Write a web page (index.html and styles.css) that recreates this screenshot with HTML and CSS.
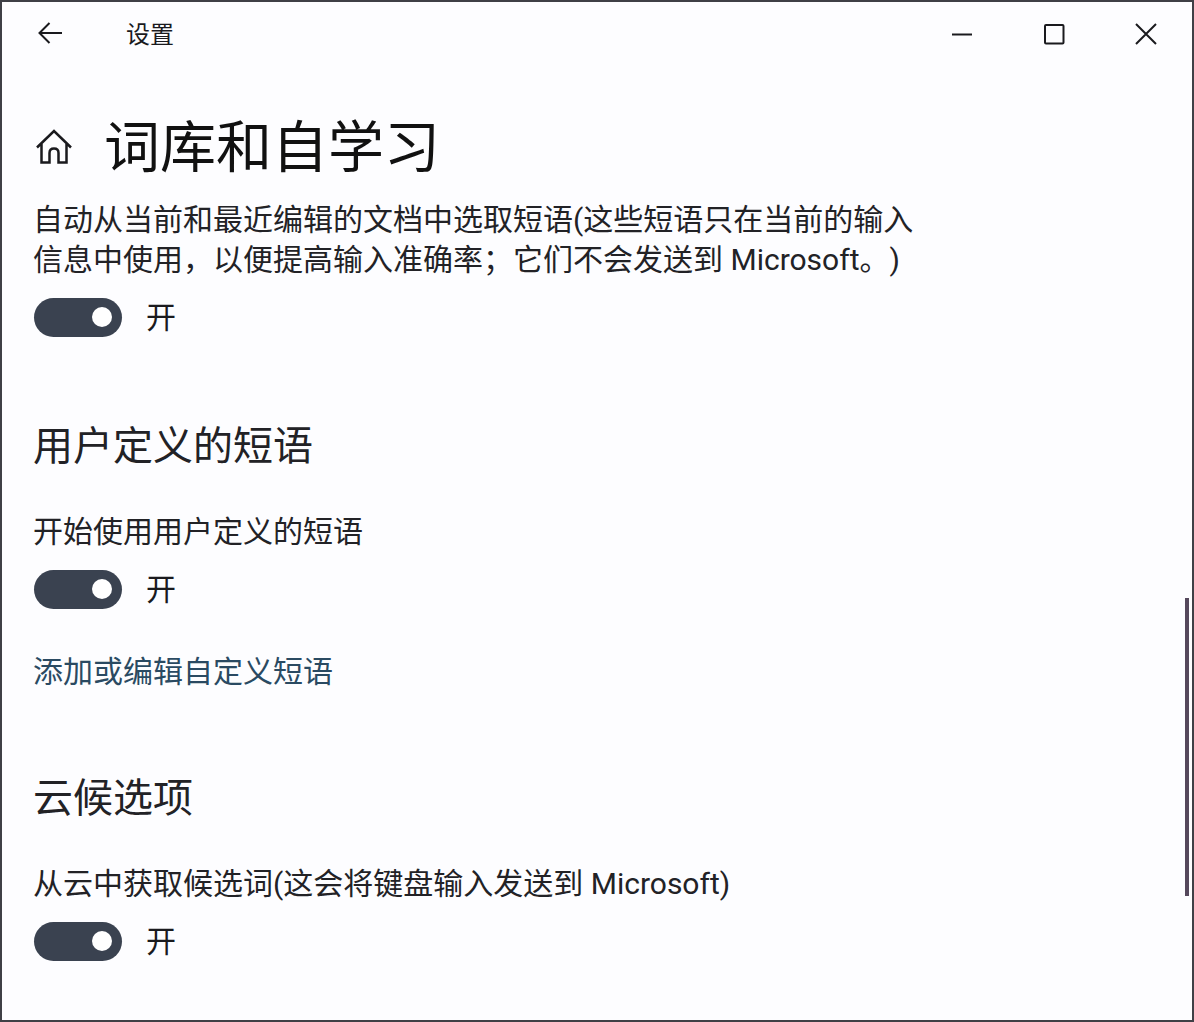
FILE: index.html
```html
<!DOCTYPE html>
<html>
<head>
  <title>设置</title>
  <meta name="viewport" content="width=device-width, initial-scale=1.0">
  <link rel="stylesheet" href="styles.css">
</head>
<body>
  <div class="window">
    <header class="titlebar">
      <svg class="back-icon" width="28" height="28" viewBox="0 0 28 28">
        <path d="M12.5 4 L2.5 14 L12.5 24 M2.5 14 H25" />
      </svg>
      <span class="app-name">设置</span>
      <div class="window-controls">
        <svg width="22" height="22" viewBox="0 0 22 22"><path d="M1 11.5 H21" /></svg>
        <svg width="22" height="22" viewBox="0 0 22 22"><rect x="2" y="2" width="18.5" height="18.5" rx="1" /></svg>
        <svg width="22" height="22" viewBox="0 0 22 22"><path d="M1 1 L21 21 M21 1 L1 21" /></svg>
      </div>
    </header>

    <div class="page-title">
      <svg class="home-icon" width="38" height="36" viewBox="0 0 38 36">
        <path d="M2 18.5 L19 2 L36 18.5 M6.5 15 V33.5 H14.5 V24 Q14.5 19.5 19 19.5 Q23.5 19.5 23.5 24 V33.5 H31.5 V15" />
      </svg>
      <h1>词库和自学习</h1>
    </div>

    <section class="intro">
      <p class="label">自动从当前和最近编辑的文档中选取短语(这些短语只在当前的输入<br>信息中使用，以便提高输入准确率；它们不会发送到 Microsoft。)</p>
      <div class="toggle-row">
        <span class="toggle"><span class="knob"></span></span>
        <span class="toggle-text">开</span>
      </div>
    </section>

    <section class="group">
      <h2>用户定义的短语</h2>
      <p class="label">开始使用用户定义的短语</p>
      <div class="toggle-row">
        <span class="toggle"><span class="knob"></span></span>
        <span class="toggle-text">开</span>
      </div>
      <a class="link" href="#">添加或编辑自定义短语</a>
    </section>

    <section class="group">
      <h2>云候选项</h2>
      <p class="label">从云中获取候选词(这会将键盘输入发送到 Microsoft)</p>
      <div class="toggle-row">
        <span class="toggle"><span class="knob"></span></span>
        <span class="toggle-text">开</span>
      </div>
    </section>

    <div class="scrollbar"></div>
  </div>
</body>
</html>
```

FILE: styles.css
```css
* {
  box-sizing: border-box;
  margin: 0;
  padding: 0;
}

html, body {
  height: 100%;
  background-color: #fdfdff;
}

body {
  font-family: Roboto, "Noto Sans CJK SC", sans-serif;
  color: #1a1a1e;
  overflow: hidden;
  text-spacing-trim: space-all;
}

.window {
  position: relative;
  height: 1022px;
  border: 2px solid #3f4046;
  padding: 0 31px;
  background-color: #fdfdff;
}

/* Title bar */
.titlebar {
  display: flex;
  align-items: center;
  height: 64px;
}

.titlebar svg path,
.titlebar svg rect,
.home-icon path {
  fill: none;
  stroke: #1a1a1e;
  stroke-width: 2;
}

.home-icon path {
  stroke-width: 2.5;
}

.back-icon {
  margin-left: 4px;
  margin-top: -2px;
}

.app-name {
  margin-left: 61px;
  margin-top: 2px;
  font-size: 24px;
  line-height: 32px;
}

.window-controls {
  display: flex;
  gap: 70px;
  margin-left: auto;
  margin-right: 4px;
}

/* Page heading */
.page-title {
  display: flex;
  align-items: center;
  margin-top: 19px;
  height: 116px;
}

.home-icon {
  margin-left: 2px;
  margin-top: 7px;
}

.page-title h1 {
  margin-left: 31px;
  margin-top: 10px;
  font-size: 56px;
  font-weight: 400;
  line-height: 106px;
  color: #111;
}

.label {
  padding-top: 3px;
  font-size: 30px;
  line-height: 40px;
  color: #222226;
}

.intro {
  margin-top: -4px;
}

.toggle-row {
  display: flex;
  align-items: center;
  gap: 24px;
  margin-top: 17px;
  height: 40px;
}

.toggle {
  display: flex;
  align-items: center;
  justify-content: flex-end;
  width: 88px;
  height: 39px;
  margin-left: 1px;
  padding-right: 10px;
  border-radius: 20px;
  background-color: #3a4250;
}

.knob {
  width: 20px;
  height: 20px;
  border-radius: 50%;
  background-color: #fff;
}

.toggle-text {
  margin-top: 2px;
  font-size: 30px;
  line-height: 40px;
}

.group {
  margin-top: 82px;
}

.group h2 {
  font-size: 40px;
  font-weight: 400;
  line-height: 56px;
  margin-bottom: 34px;
  color: #222226;
}

.link {
  display: block;
  margin-top: 43px;
  margin-bottom: -3px;
  font-size: 30px;
  line-height: 40px;
  color: #2a4a62;
  text-decoration: none;
}

/* Overlay scrollbar */
.scrollbar {
  position: absolute;
  top: 596px;
  right: 3px;
  width: 4px;
  height: 298px;
  background-color: #55485c;
}
```
